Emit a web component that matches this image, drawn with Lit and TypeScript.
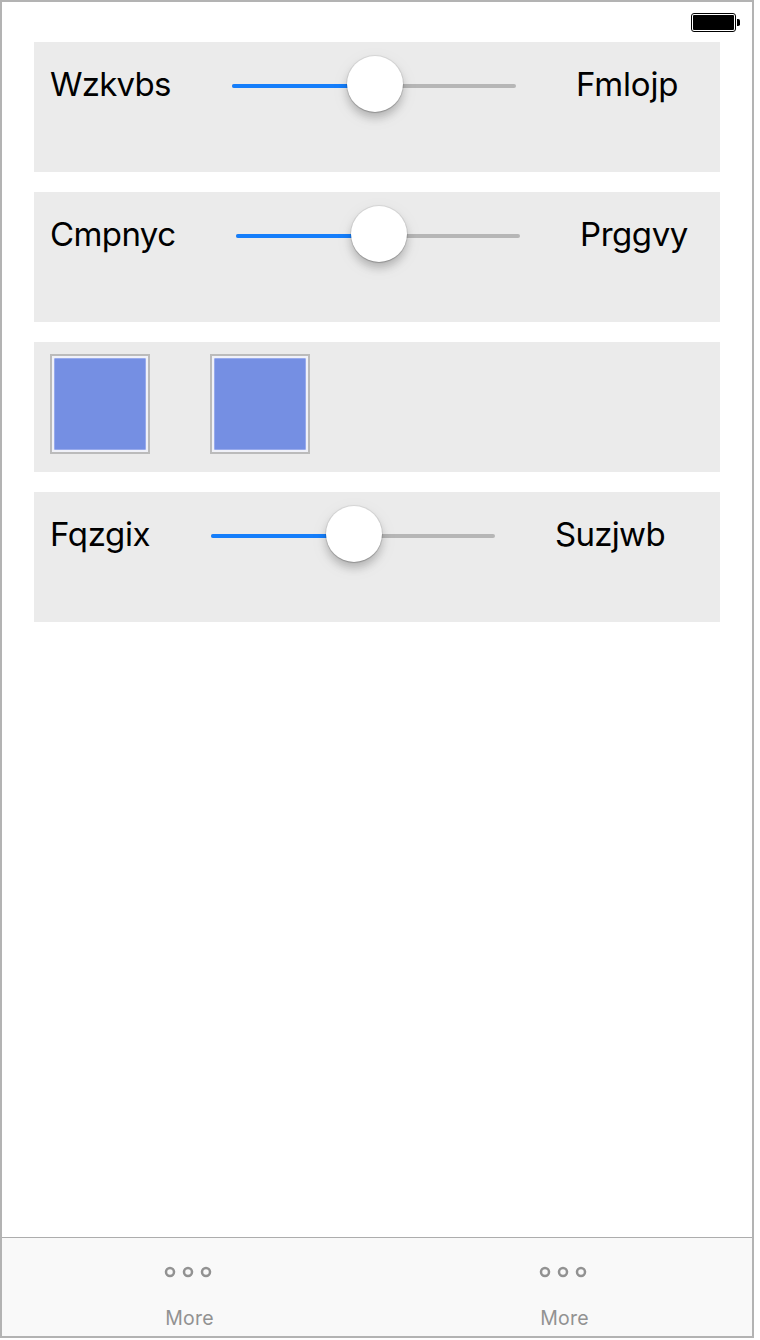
import { LitElement, html, css, svg } from "lit";
import { customElement, property } from "lit/decorators.js";
import { styleMap } from "lit/directives/style-map.js";

@customElement("slider-row")
class SliderRow extends LitElement {
  @property() before = "";
  @property() after = "";
  @property({ type: Number }) labelWidth = 120;
  @property({ type: Number }) beforeSpacing = 0;
  @property({ type: Number }) afterSpacing = 0;
  @property({ type: Number }) value = 50;

  static styles = css`
    :host { display: block; }
    .row { display: flex; align-items: flex-start; gap: 60px; }
    .label { flex: none; font-size: 33px; line-height: 40px; white-space: nowrap; margin-top: 10px; }
    .slider { flex: none; width: 284px; height: 60px; display: grid; align-items: center; }
    .track, .thumb-line { grid-area: 1 / 1; }
    .track { display: flex; height: 4px; border-radius: 2px; overflow: hidden; background: #b6b6b6; margin-top: 4px; }
    .fill { background: #157efb; }
    .thumb-line { display: flex; justify-content: center; padding-left: 2px; }
    .thumb {
      width: 56px; height: 56px; border-radius: 50%; background: #fff;
      box-shadow: 0 0 0 1px rgba(0, 0, 0, 0.07), 0 1px 1px rgba(0, 0, 0, 0.16), 0 6px 9px rgba(0, 0, 0, 0.2), 0 5px 20px rgba(0, 0, 0, 0.06);
    }
  `;

  render() {
    return html`<div class="row">
      <div class="label" style=${styleMap({ width: `${this.labelWidth}px`, letterSpacing: `${this.beforeSpacing}px` })}>${this.before}</div>
      <div class="slider">
        <div class="track"><div class="fill" style=${styleMap({ width: `${this.value}%` })}></div></div>
        <div class="thumb-line"><div class="thumb"></div></div>
      </div>
      <div class="label" style=${styleMap({ letterSpacing: `${this.afterSpacing}px` })}>${this.after}</div>
    </div>`;
  }
}

@customElement("app-root")
class AppRoot extends LitElement {
  static styles = css`
    :host { display: block; font-family: Inter, "Liberation Sans", sans-serif; color: #000; }
    .page { background: #fff; height: 1340px; }
    .screen {
      box-sizing: border-box; width: 754px; height: 1338px; border: 2px solid #b3b3b3;
      display: flex; flex-direction: column; background: #fff;
    }
    .status { height: 40px; flex: none; display: flex; justify-content: flex-end; padding: 10px 12px 0 0; box-sizing: border-box; }
    .battery { display: block; width: 50px; height: 22px; }
    .content { flex: 1; display: flex; flex-direction: column; gap: 20px; padding: 0 32px; }
    .card { box-sizing: border-box; height: 130px; background: #ebebeb; padding: 12px 16px 0; }
    .swatches { display: flex; gap: 60px; }
    .swatch { box-sizing: border-box; width: 100px; height: 100px; border: 2px solid #bbbbbb; background: #f0f1f8; padding: 2px; display: flex; }
    .color { flex: 1; border: 1px solid #98aaec; border-radius: 1px; background: #758fe3; }
    .tabs { flex: none; box-sizing: border-box; height: 99px; border-top: 1px solid #adadad; background: #f9f9f9; display: grid; grid-template-columns: 1fr 1fr; }
    .tab { display: flex; flex-direction: column; align-items: center; color: #929292; padding-top: 28px; font-size: 19.5px; line-height: 24px; letter-spacing: 0.25px; }
    .dots { width: 48px; height: 12px; display: block; margin: 0 3px 28px 0; }
  `;

  private tab() {
    return html`<div class="tab">
      <svg class="dots" viewBox="0 0 48 12">
        ${[6, 24, 42].map((x) => svg`<circle cx=${x} cy="6" r="4" fill="none" stroke="#929292" stroke-width="2.5"/>`)}
      </svg>
      <span>More</span>
    </div>`;
  }

  render() {
    return html`<div class="page"><div class="screen">
      <div class="status">
        <svg class="battery" viewBox="0 0 50 22">
          <rect x="1.5" y="1.5" width="44" height="18" rx="2.5" fill="#fff" stroke="#000"/>
          <rect x="3" y="3" width="41" height="15" rx="1" fill="#000"/>
          <path d="M47 7h1.2a1.8 1.8 0 0 1 1.8 1.8v3.4a1.8 1.8 0 0 1-1.8 1.8H47z" fill="#000"/>
        </svg>
      </div>
      <div class="content">
        <div class="card"><slider-row before="Wzkvbs" after="Fmlojp" .labelWidth=${122} .beforeSpacing=${-0.75} .afterSpacing=${-0.2}></slider-row></div>
        <div class="card"><slider-row before="Cmpnyc" after="Prggvy" .labelWidth=${126} .beforeSpacing=${-0.6} .afterSpacing=${-0.45}></slider-row></div>
        <div class="card swatches">
          <div class="swatch"><div class="color"></div></div>
          <div class="swatch"><div class="color"></div></div>
        </div>
        <div class="card"><slider-row before="Fqzgix" after="Suzjwb" .labelWidth=${101} .beforeSpacing=${-0.35} .afterSpacing=${-0.7}></slider-row></div>
      </div>
      <div class="tabs">${this.tab()}${this.tab()}</div>
    </div></div>`;
  }
}
